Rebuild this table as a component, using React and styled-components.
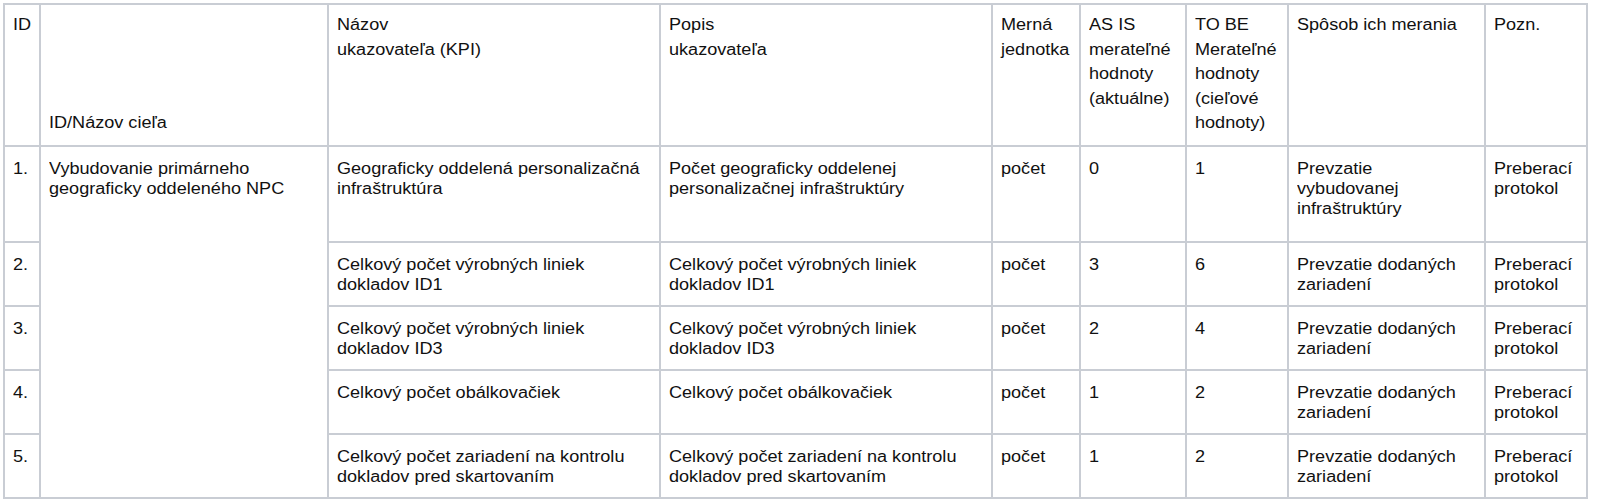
import React from "react";
import styled, { createGlobalStyle } from "styled-components";

const Global = createGlobalStyle`
  html, body { margin: 0; padding: 0; background: #fff; }
  body { font-family: "Liberation Sans", Arial, sans-serif; color: #111; }
`;

const Wrap = styled.div`
  padding: 3px 0 0 3px;
`;

const Table = styled.table`
  border-collapse: collapse;
  table-layout: fixed;
  width: 1585px;
  font-size: 16px;
  color: #111;
`;

const Col = styled.col`
  width: ${(p) => p.$w}px;
`;

const HeadCell = styled.td`
  border: 2px solid #c9cdd4;
  padding: 8px 8px 4px;
  vertical-align: top;
  line-height: 24.5px;
`;

const Row = styled.tr`
  height: ${(p) => p.$h}px;
`;

const Cell = styled.td`
  border: 2px solid #c9cdd4;
  padding: 12px 8px 2px;
  vertical-align: top;
  line-height: 20px;
`;

const Line = styled.div`
  white-space: nowrap;
  transform: scaleX(1.13);
  transform-origin: 0 50%;
`;

const widths = [36, 288, 332, 332, 88, 106, 102, 197, 102];

const header = [
  ["ID"],
  ["", "", "", "", "ID/Názov cieľa"],
  ["Názov", "ukazovateľa (KPI)"],
  ["Popis", "ukazovateľa"],
  ["Merná", "jednotka"],
  ["AS IS", "merateľné", "hodnoty", "(aktuálne)"],
  ["TO BE", "Merateľné", "hodnoty", "(cieľové", "hodnoty)"],
  ["Spôsob ich merania"],
  ["Pozn."],
];

const rows = [
  {
    id: "1.",
    h: 96,
    name: ["Geograficky oddelená personalizačná", "infraštruktúra"],
    desc: ["Počet geograficky oddelenej", "personalizačnej infraštruktúry"],
    asis: "0",
    tobe: "1",
    how: ["Prevzatie", "vybudovanej", "infraštruktúry"],
  },
  {
    id: "2.",
    h: 64,
    name: ["Celkový počet výrobných liniek", "dokladov ID1"],
    desc: ["Celkový počet výrobných liniek", "dokladov ID1"],
    asis: "3",
    tobe: "6",
    how: ["Prevzatie dodaných", "zariadení"],
  },
  {
    id: "3.",
    h: 64,
    name: ["Celkový počet výrobných liniek", "dokladov ID3"],
    desc: ["Celkový počet výrobných liniek", "dokladov ID3"],
    asis: "2",
    tobe: "4",
    how: ["Prevzatie dodaných", "zariadení"],
  },
  {
    id: "4.",
    h: 64,
    name: ["Celkový počet obálkovačiek"],
    desc: ["Celkový počet obálkovačiek"],
    asis: "1",
    tobe: "2",
    how: ["Prevzatie dodaných", "zariadení"],
  },
  {
    id: "5.",
    h: 64,
    name: ["Celkový počet zariadení na kontrolu", "dokladov pred skartovaním"],
    desc: ["Celkový počet zariadení na kontrolu", "dokladov pred skartovaním"],
    asis: "1",
    tobe: "2",
    how: ["Prevzatie dodaných", "zariadení"],
  },
];

const Lines = ({ lines }) =>
  lines.map((l, i) => <Line key={i}>{l === "" ? "\u00a0" : l}</Line>);

export default function App() {
  return (
    <>
      <Global />
      <Wrap>
        <Table>
          <colgroup>
            {widths.map((w, i) => (
              <Col key={i} $w={w} />
            ))}
          </colgroup>
          <tbody>
            <Row $h={142}>
              {header.map((h, i) => (
                <HeadCell key={i}>
                  <Lines lines={h} />
                </HeadCell>
              ))}
            </Row>
            {rows.map((r, i) => (
              <Row key={r.id} $h={r.h}>
                <Cell>
                  <Lines lines={[r.id]} />
                </Cell>
                {i === 0 && (
                  <Cell rowSpan={5}>
                    <Lines lines={["Vybudovanie primárneho", "geograficky oddeleného NPC"]} />
                  </Cell>
                )}
                <Cell>
                  <Lines lines={r.name} />
                </Cell>
                <Cell>
                  <Lines lines={r.desc} />
                </Cell>
                <Cell>
                  <Lines lines={["počet"]} />
                </Cell>
                <Cell>
                  <Lines lines={[r.asis]} />
                </Cell>
                <Cell>
                  <Lines lines={[r.tobe]} />
                </Cell>
                <Cell>
                  <Lines lines={r.how} />
                </Cell>
                <Cell>
                  <Lines lines={["Preberací", "protokol"]} />
                </Cell>
              </Row>
            ))}
          </tbody>
        </Table>
      </Wrap>
    </>
  );
}
